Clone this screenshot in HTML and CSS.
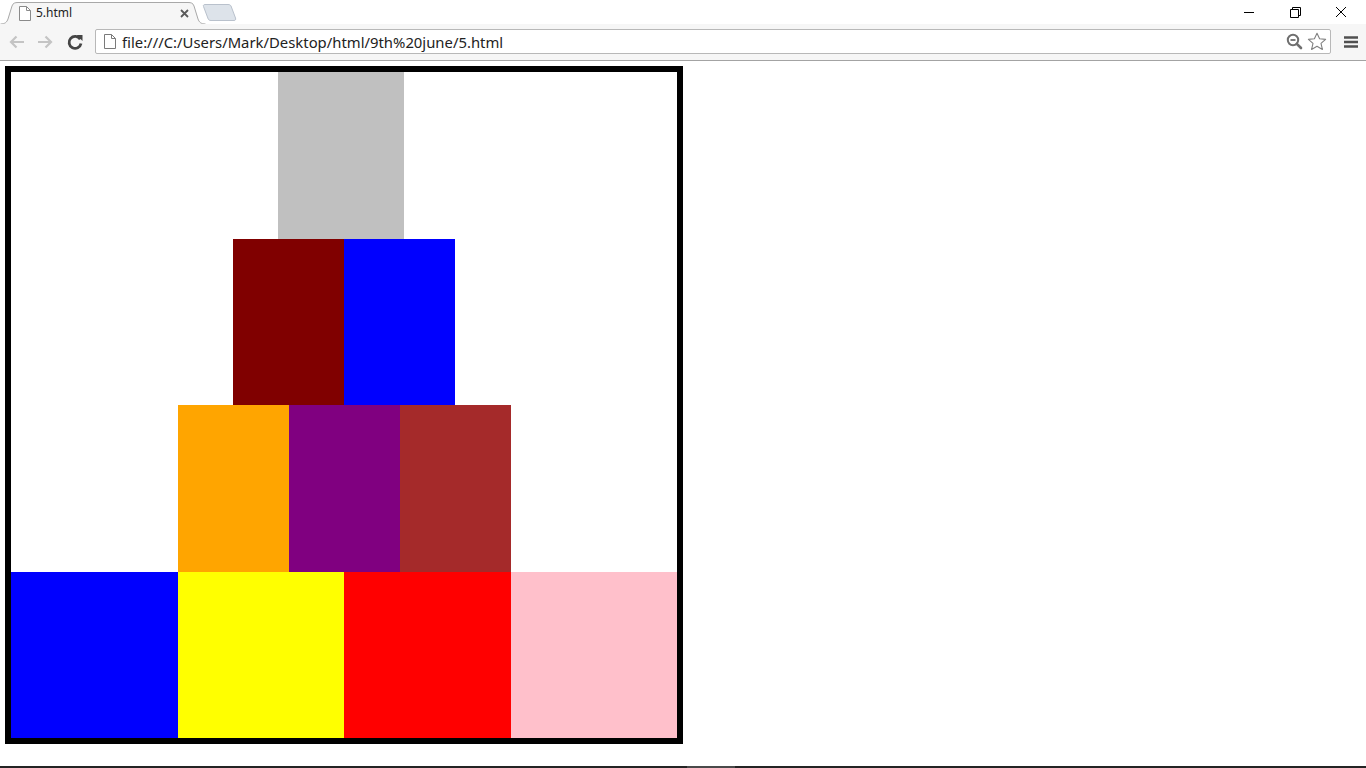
FILE: index.html
```html
<!DOCTYPE html>
<html>
<head>
<meta charset="utf-8">
<title>5.html</title>
<link rel="stylesheet" href="styles.css">
</head>
<body>
<div class="window">
  <div class="tabstrip">
    <div class="tab">
      <svg class="tab-shape" width="206" height="24" viewBox="0 0 206 24">
        <path d="M0.5 24 C5 24 7 22 8 19 L12 6 C13 3 15 2.5 18 2.5 L188 2.5 C191 2.5 193 3 194 6 L198 19 C199 22 201 24 205.5 24" fill="#f6f6f6" stroke="#a8a8a8" stroke-width="1"/>
      </svg>
      <svg class="favicon" width="12" height="15" viewBox="0 0 12 15">
        <path d="M0.5 0.5 H7.5 L11.5 4.5 V14.5 H0.5 Z" fill="#fff" stroke="#8a8a8a"/>
        <path d="M7.5 0.5 V4.5 H11.5" fill="none" stroke="#8a8a8a"/>
      </svg>
      <span class="tab-title">5.html</span>
      <svg class="tab-close" width="9" height="9" viewBox="0 0 9 9">
        <path d="M1 1 L8 8 M8 1 L1 8" stroke="#5a5a5a" stroke-width="1.8"/>
      </svg>
    </div>
    <svg class="newtab" width="36" height="18" viewBox="0 0 36 18">
      <path d="M1.5 2.5 C1 1.5 1.5 0.5 3 0.5 L26 0.5 C27.5 0.5 28.5 1 29 2 L33.5 14 C34 15.5 33.5 16.5 32 16.5 L9 16.5 C7.5 16.5 6.7 16 6.2 15 Z" fill="#dde3ea" stroke="#b9c1cc"/>
    </svg>
    <div class="spacer"></div>
    <div class="winctl">
      <svg width="46" height="24" viewBox="0 0 46 24"><path d="M18 12.5 H28" stroke="#000" stroke-width="1"/></svg>
      <svg width="46" height="24" viewBox="0 0 46 24"><path d="M18.5 9.5 H26.5 V17.5 H18.5 Z M20.5 9.5 V7.5 H28.5 V15.5 H26.5" fill="none" stroke="#000" stroke-width="1"/></svg>
      <svg width="46" height="24" viewBox="0 0 46 24"><path d="M18 7 L28 17 M28 7 L18 17" stroke="#000" stroke-width="1"/></svg>
    </div>
  </div>
  <div class="toolbar">
    <svg class="navbtn" width="18" height="16" viewBox="0 0 18 16">
      <path d="M16 8 H3 M8.5 2.5 L3 8 L8.5 13.5" fill="none" stroke="#c4c4c4" stroke-width="2.2"/>
    </svg>
    <svg class="navbtn" width="18" height="16" viewBox="0 0 18 16">
      <path d="M2 8 H15 M9.5 2.5 L15 8 L9.5 13.5" fill="none" stroke="#c4c4c4" stroke-width="2.2"/>
    </svg>
    <svg class="navbtn reload" width="18" height="18" viewBox="0 0 18 18">
      <path d="M14.2 6.2 A6 6 0 1 0 15 10.5" fill="none" stroke="#454545" stroke-width="2.8"/>
      <path d="M10.5 2 L16.5 2 L16.5 8 Z" fill="#454545"/>
    </svg>
    <div class="omnibox">
      <svg class="omni-page" width="12" height="15" viewBox="0 0 12 15">
        <path d="M0.5 0.5 H7.5 L11.5 4.5 V14.5 H0.5 Z" fill="#fff" stroke="#7a7a7a"/>
        <path d="M7.5 0.5 V4.5 H11.5" fill="none" stroke="#7a7a7a"/>
      </svg>
      <span class="url">file:///C:/Users/Mark/Desktop/html/9th%20june/5.html</span>
      <div class="spacer"></div>
      <svg class="omni-icon" width="17" height="17" viewBox="0 0 17 17">
        <circle cx="7" cy="7" r="5.2" fill="none" stroke="#6f6f6f" stroke-width="2"/>
        <path d="M4.5 7 H9.5" stroke="#6f6f6f" stroke-width="1.8"/>
        <path d="M10.8 10.8 L15 15" stroke="#6f6f6f" stroke-width="2.6" stroke-linecap="round"/>
      </svg>
      <svg class="omni-icon star" width="20" height="19" viewBox="0 0 20 19">
        <path d="M10 1.2 L12.6 6.8 L18.6 7.4 L14 11.4 L15.4 17.4 L10 14.3 L4.6 17.4 L6 11.4 L1.4 7.4 L7.4 6.8 Z" fill="#fff" stroke="#808080" stroke-width="1.1" stroke-linejoin="round"/>
      </svg>
    </div>
    <svg class="menu" width="14" height="12" viewBox="0 0 14 12">
      <path d="M0 1.5 H14 M0 6 H14 M0 10.5 H14" stroke="#505050" stroke-width="2.4"/>
    </svg>
  </div>
  <div class="page">
    <div class="board">
      <div class="row row1">
        <div class="cell silver"></div>
      </div>
      <div class="row row2">
        <div class="cell maroon"></div>
        <div class="cell blue"></div>
      </div>
      <div class="row row3">
        <div class="cell orange"></div>
        <div class="cell purple"></div>
        <div class="cell brown"></div>
      </div>
      <div class="row row4">
        <div class="cell wide blue"></div>
        <div class="cell narrow yellow"></div>
        <div class="cell wide red"></div>
        <div class="cell narrow pink"></div>
      </div>
    </div>
  </div>
  <div class="taskbar">
    <div class="task-seg"></div>
  </div>
</div>
</body>
</html>
```

FILE: styles.css
```css
* { box-sizing: border-box; }
html, body {
  margin: 0;
  padding: 0;
  width: 1366px;
  height: 768px;
  overflow: hidden;
  background: #ffffff;
  font-family: "Noto Sans", "Open Sans", "Liberation Sans", sans-serif;
}
.window {
  display: flex;
  flex-direction: column;
  width: 1366px;
  height: 768px;
}
.tabstrip {
  height: 24px;
  display: flex;
  align-items: flex-start;
  background: #ffffff;
  flex: none;
}
.tab {
  position: relative;
  width: 206px;
  height: 24px;
  display: flex;
  align-items: center;
  padding: 2px 0 0 19px;
}
.tab-shape {
  position: absolute;
  left: 0;
  top: 0;
}
.favicon, .tab-title, .tab-close {
  position: relative;
}
.tab-title {
  font-size: 12px;
  color: #222;
  margin-left: 5px;
  flex: 1;
  line-height: 16px;
}
.tab-close {
  margin-right: 17px;
}
.newtab {
  margin-left: -4px;
  margin-top: 4px;
}
.spacer { flex: 1; }
.winctl {
  display: flex;
  margin-right: 2px;
}
.toolbar {
  height: 37px;
  background: #f6f6f6;
  border-bottom: 1px solid #a3a3a3;
  display: flex;
  align-items: center;
  padding: 0 0 1px 8px;
  flex: none;
}
.navbtn {
  margin-right: 10px;
}
.navbtn.reload {
  margin-left: 2px;
  margin-right: 11px;
}
.omnibox {
  width: 1236px;
  height: 25px;
  background: #fff;
  border: 1px solid #b8b8b8;
  border-radius: 2px;
  display: flex;
  align-items: center;
  padding: 0 3px 0 8px;
}
.url {
  font-size: 14.85px;
  color: #222;
  margin-left: 6px;
  line-height: 20px;
  white-space: nowrap;
}
.omni-icon { margin-left: 4px; }
.menu { margin-left: 13px; }
.page {
  flex: 1;
  padding: 5px 0 0 5px;
  background: #fff;
}
.board {
  width: 678px;
  height: 678px;
  border: 6px solid #000;
  display: flex;
  flex-direction: column;
}
.row { display: flex; }
.row1 { height: 167px; padding-left: 267px; }
.row2 { height: 166px; padding-left: 222px; }
.row3 { height: 167px; padding-left: 167px; }
.row4 { height: 166px; }
.cell { width: 111px; height: 100%; }
.row1 .cell { width: 126px; }
.cell.wide { width: 167px; }
.cell.narrow { width: 166px; }
.silver { background: #c0c0c0; }
.maroon { background: #800000; }
.blue { background: #0000ff; }
.orange { background: #ffa500; }
.purple { background: #800080; }
.brown { background: #a52a2a; }
.yellow { background: #ffff00; }
.red { background: #ff0000; }
.pink { background: #ffc0cb; }
.taskbar {
  height: 2px;
  background: #242424;
  flex: none;
  padding-left: 687px;
}
.task-seg {
  width: 48px;
  height: 2px;
  background: #4a4a4a;
}
```
